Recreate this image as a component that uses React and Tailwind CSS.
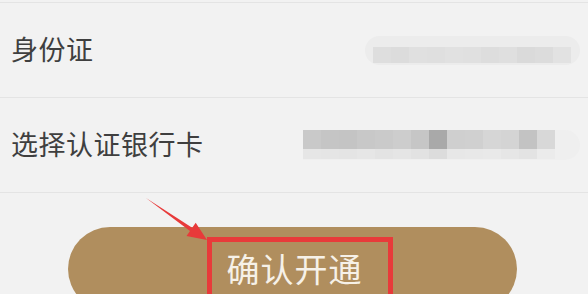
const row2Top = ['#c9c9c9', '#c5c5c5', '#c4c4c4', '#c8c8c8', '#cacaca', '#cdcdcd', '#c6c6c6', '#a9a9a9', '#cfcfcf', '#d0d0d0', '#d6d6d6', '#d4d4d4', '#c3c3c3', '#d8d8d8'];
const row2Bottom = ['#e6e6e6', '#e5e5e5', '#e4e4e4', '#e6e6e6', '#e3e3e3', '#e5e5e5', '#e2e2e2', '#dcdcdc', '#e7e7e7', '#e8e8e8', '#e9e9e9', '#e6e6e6', '#e3e3e3', '#ebebeb'];
const row1Blocks = ['#dedede', '#dcdcdc', '#e0e0e0', '#dfdfdf', '#e1e1e1', '#e0e0e0', '#dddddd', '#dfdfdf', '#dadada', '#dcdcdc', '#e2e2e2'];

function Row({ label, children }) {
  return (
    <div className="h-[95px] border-b border-[#e4e4e4] flex items-center justify-between pl-[11px] pr-[8px]">
      <span className="text-[27px] leading-none text-[#3f3f3f] tracking-[0.5px] pb-[4px]">{label}</span>
      {children}
    </div>
  );
}

export default function App() {
  return (
    <div
      className="relative w-[588px] h-[294px] overflow-hidden bg-[#f2f2f2]"
      style={{ fontFamily: '"Noto Sans CJK SC", "Noto Sans", sans-serif' }}
    >
      <div className="h-[2px]" />
      <div className="border-t border-[#e4e4e4]">
        <Row label="身份证">
          <div className="w-[215px] h-[29px] rounded-full bg-[#ececec] flex items-end pl-[8px] pb-[2px]">
            <div className="flex h-[16px]">
              {row1Blocks.map((c, i) => (
                <div key={i} className="w-[18px] h-full" style={{ background: c }} />
              ))}
            </div>
          </div>
        </Row>
        <Row label="选择认证银行卡">
          <div className="w-[277px] h-[30px] rounded-r-full bg-[#efefef] flex flex-col">
            <div className="flex h-[19px]">
              {row2Top.map((c, i) => (
                <div key={i} className="w-[18px] h-full" style={{ background: c }} />
              ))}
            </div>
            <div className="flex h-[10px]">
              {row2Bottom.map((c, i) => (
                <div key={i} className="w-[18px] h-full" style={{ background: c }} />
              ))}
            </div>
          </div>
        </Row>
      </div>

      <div className="mt-[34px] ml-[68px] w-[449px] h-[84px] rounded-full bg-[#b08e5e] flex items-center justify-center">
        <span className="text-[33px] leading-none text-[#f6f1e8] tracking-[1px] pl-[4px] pb-[2px]">确认开通</span>
      </div>

      {/* annotation */}
      <div className="absolute left-[207px] top-[237px] w-[186px] h-[80px] border-[5px] border-[#e83a3a]" />
      <svg className="absolute left-0 top-0" width="588" height="294" viewBox="0 0 588 294">
        <polygon
          points="146,198 192.2,227.8 195.7,222.8 207,240 186.5,236 190,231"
          fill="#e83a3a"
        />
      </svg>
    </div>
  );
}
